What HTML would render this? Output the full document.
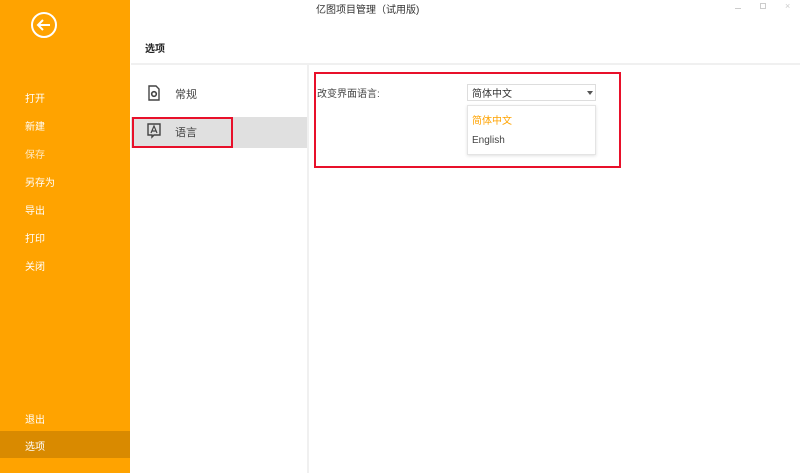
<!DOCTYPE html>
<html><head><meta charset="utf-8"><style>
*{margin:0;padding:0;box-sizing:border-box}
body{width:800px;height:473px;overflow:hidden;background:#fff;font-family:"Liberation Sans","Noto Sans CJK SC",sans-serif;position:relative;font-size:10px;color:#333}
.abs{position:absolute}
.side{left:0;top:0;width:130px;height:473px;background:#FFA300}
.side div.it{position:absolute;left:25px;color:#fff;font-size:10px}
</style></head><body>
<div class="abs side">
<svg class="abs" style="left:30px;top:11px" width="28" height="28" viewBox="0 0 28 28"><circle cx="14" cy="14" r="12" fill="none" stroke="#fff" stroke-width="2"/><path d="M20 14H8M13 9l-5 5 5 5" fill="none" stroke="#fff" stroke-width="2"/></svg>
<div class="it" style="top:90px">打开</div>
<div class="it" style="top:118px">新建</div>
<div class="it" style="top:146px;opacity:.75">保存</div>
<div class="it" style="top:174px">另存为</div>
<div class="it" style="top:202px">导出</div>
<div class="it" style="top:230px">打印</div>
<div class="it" style="top:258px">关闭</div>
<div class="it" style="top:411px">退出</div>
<div class="abs" style="left:0;top:431px;width:130px;height:27px;background:#D98A00"></div>
<div class="it" style="top:438px">选项</div>
</div>
<div class="abs" style="left:316px;top:1px;font-size:10px;color:#333">亿图项目管理（试用版)</div>
<div class="abs" style="left:735px;top:8px;width:6px;height:1px;background:#ccc"></div>
<div class="abs" style="left:760px;top:3px;width:6px;height:6px;border:1px solid #ccc"></div>
<div class="abs" style="left:785px;top:1px;color:#ccc;font-size:9px">×</div>
<div class="abs" style="left:145px;top:40px;font-size:10px;font-weight:bold;color:#222">选项</div>
<div class="abs" style="left:131px;top:63px;width:669px;height:2px;background:#f0f0f0"></div>
<div class="abs" style="left:307px;top:65px;width:2px;height:408px;background:#f0f0f0"></div>
<div class="abs" style="left:131px;top:117px;width:176px;height:31px;background:#e0e0e0"></div>
<div class="abs" style="left:132px;top:117px;width:101px;height:31px;border:2px solid #e8102a"></div>
<svg class="abs" style="left:147px;top:85px" width="14" height="16" viewBox="0 0 14 16"><path d="M2 1h7l3 3v11H2z" fill="none" stroke="#444" stroke-width="1.4"/><circle cx="7" cy="9" r="2.3" fill="none" stroke="#444" stroke-width="1.6"/></svg>
<div class="abs" style="left:175px;top:86px;font-size:11px;color:#444">常规</div>
<svg class="abs" style="left:147px;top:123px" width="14" height="16" viewBox="0 0 14 16"><path d="M1 1h12v11H7l-2 2v-2H1z" fill="none" stroke="#444" stroke-width="1.4"/><path d="M4 10l3-7 3 7M5 8h4" fill="none" stroke="#444" stroke-width="1.2"/></svg>
<div class="abs" style="left:175px;top:124px;font-size:11px;color:#444">语言</div>
<div class="abs" style="left:314px;top:72px;width:307px;height:96px;border:2px solid #e8102a"></div>
<div class="abs" style="left:317px;top:85px;font-size:10px;color:#444">改变界面语言:</div>
<div class="abs" style="left:467px;top:84px;width:129px;height:17px;border:1px solid #ddd"></div>
<div class="abs" style="left:472px;top:85px;font-size:10px;color:#333">简体中文</div>
<div class="abs" style="left:587px;top:91px;width:0;height:0;border-left:3px solid transparent;border-right:3px solid transparent;border-top:4px solid #555"></div>
<div class="abs" style="left:467px;top:105px;width:129px;height:50px;border:1px solid #e4e4e4;box-shadow:0 1px 3px rgba(0,0,0,.12);background:#fff"></div>
<div class="abs" style="left:472px;top:112px;font-size:10px;color:#FFA300">简体中文</div>
<div class="abs" style="left:472px;top:135px;font-size:10px;color:#444">English</div>
</body></html>
